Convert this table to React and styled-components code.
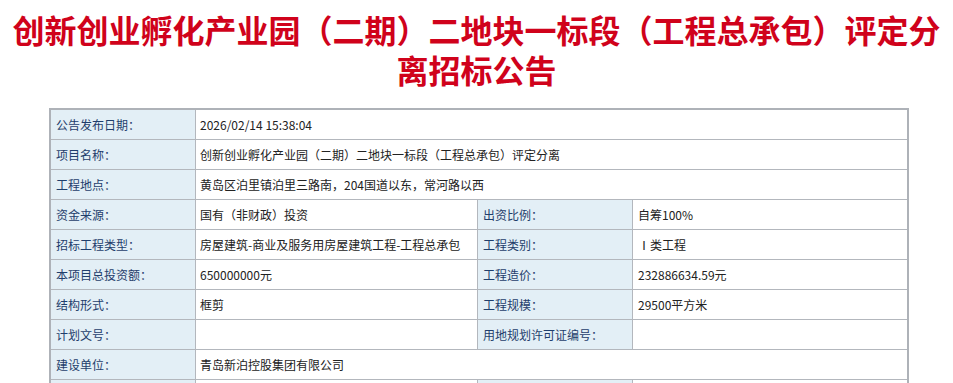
import React from 'react';
import styled, { createGlobalStyle } from 'styled-components';

const GlobalStyle = createGlobalStyle`
  body {
    margin: 0;
    background: #ffffff;
    font-family: "Noto Sans CJK SC", "Liberation Sans", sans-serif;
  }
`;

const Page = styled.div`
  padding: 9px 8px 0;
`;

const Title = styled.h1`
  margin: 0 0 19px;
  font-size: 32px;
  line-height: 40px;
  font-weight: 700;
  color: #d0021b;
  text-align: center;
`;

const InfoTable = styled.table`
  width: 860px;
  margin-left: 41px;
  table-layout: fixed;
  border-collapse: separate;
  border-spacing: 0;
  border: 2px solid #aeb2b8;
  font-size: 12px;
`;

const Cell = styled.td`
  box-sizing: border-box;
  height: 30px;
  padding: 0 0 0 5px;
  border-right: 1px solid #b3b7bd;
  border-bottom: 1px solid #b3b7bd;
  white-space: nowrap;
  overflow: hidden;
  &:last-child {
    border-right: none;
  }
`;

const Label = styled(Cell)`
  background: #e3eff6;
  color: #1f3e6c;
`;

const Value = styled(Cell)`
  background: #ffffff;
  color: #222222;
  padding-left: ${p => (p.$wide ? 4 : 5)}px;
`;

const rows = [
  { label: '公告发布日期：', value: '2026/02/14 15:38:04' },
  { label: '项目名称：', value: '创新创业孵化产业园（二期）二地块一标段（工程总承包）评定分离' },
  { label: '工程地点：', value: '黄岛区泊里镇泊里三路南，204国道以东，常河路以西' },
  { label: '资金来源：', value: '国有（非财政）投资', label2: '出资比例：', value2: '自筹100%' },
  { label: '招标工程类型：', value: '房屋建筑-商业及服务用房屋建筑工程-工程总承包', label2: '工程类别：', value2: 'Ⅰ类工程' },
  { label: '本项目总投资额：', value: '650000000元', label2: '工程造价：', value2: '232886634.59元' },
  { label: '结构形式：', value: '框剪', label2: '工程规模：', value2: '29500平方米' },
  { label: '计划文号：', value: '', label2: '用地规划许可证编号：', value2: '' },
  { label: '建设单位：', value: '青岛新泊控股集团有限公司' },
  { label: '', value: '', label2: '', value2: '' },
];

export default function App() {
  return (
    <Page>
      <GlobalStyle />
      <Title>创新创业孵化产业园（二期）二地块一标段（工程总承包）评定分离招标公告</Title>
      <InfoTable>
        <colgroup>
          <col style={{ width: 145 }} />
          <col style={{ width: 282 }} />
          <col style={{ width: 155 }} />
          <col style={{ width: 274 }} />
        </colgroup>
        <tbody>
          {rows.map((row, i) => (
            <tr key={i}>
              <Label>{row.label}</Label>
              {row.label2 === undefined ? (
                <Value colSpan={3} $wide>{row.value}</Value>
              ) : (
                <>
                  <Value $wide>{row.value}</Value>
                  <Label>{row.label2}</Label>
                  <Value>{row.value2}</Value>
                </>
              )}
            </tr>
          ))}
        </tbody>
      </InfoTable>
    </Page>
  );
}
